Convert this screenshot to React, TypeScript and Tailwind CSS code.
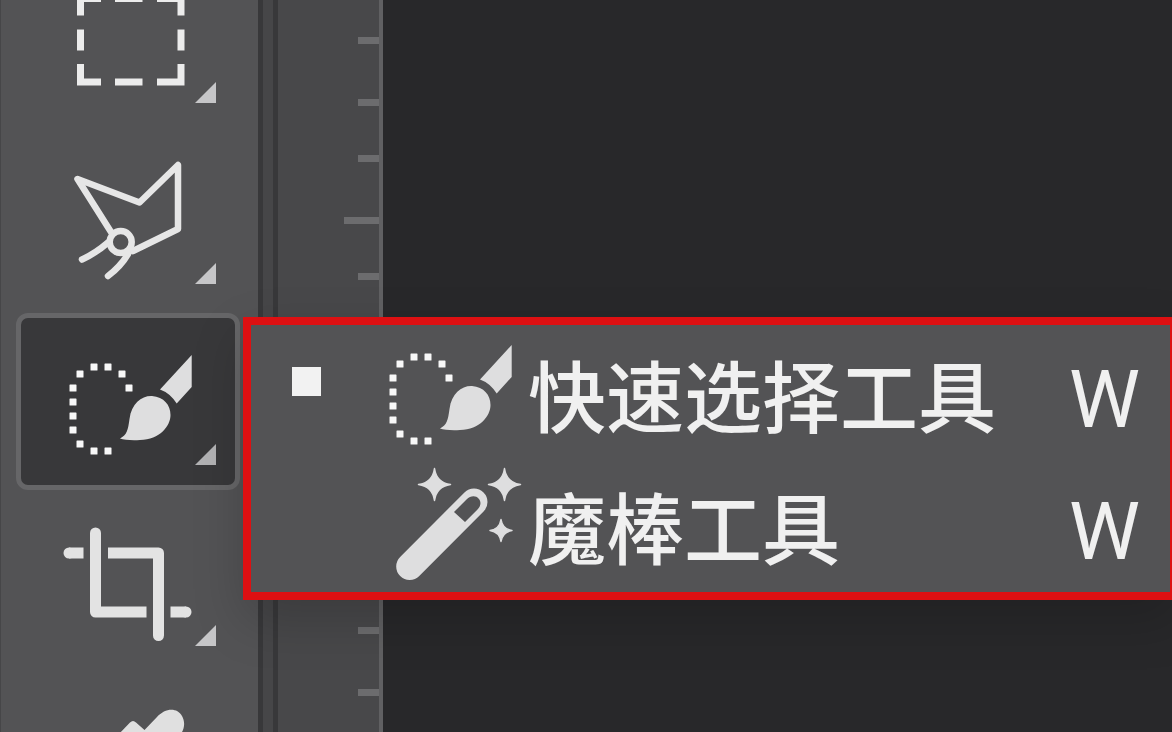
import type { ReactNode } from "react";

const selectionDots = [
  [81, 57], [74, 43], [60, 36], [46, 36], [32, 43], [25, 57],
  [25, 71], [25, 85], [25, 99], [32, 113], [46, 120], [60, 120],
];

function MarqueeIcon() {
  return (
    <svg viewBox="0 0 160 141" className="h-[141px] w-40" fill="none" stroke="#ececec" strokeWidth="7" aria-hidden="true">
      <path d="M32.5 46.5V29.5H53M67 29.5H94.5M109 29.5H133V46.5M32.5 60.5V81.5M133 60.5V81.5M32.5 95V113H53M67 113H94.5M109 113H133V95" />
    </svg>
  );
}

function LassoIcon() {
  return (
    <svg viewBox="0 0 160 141" className="h-[141px] w-40" fill="none" stroke="#e6e6e6" strokeWidth="6.5" strokeLinecap="round" strokeLinejoin="round" aria-hidden="true">
      <path d="M63 82L29.5 29L91.5 52.5L130 15V79L85 101" />
      <circle cx="72.7" cy="92" r="11" strokeWidth="6.5" />
      <path d="M34 109.5Q48 103 60 92.500M60 126Q73 116 80 104" />
    </svg>
  );
}

function QuickSelectionIcon({ viewBox, className }: { viewBox: string; className: string }) {
  return (
    <svg viewBox={viewBox} className={className} aria-hidden="true">
      {selectionDots.map(([x, y]) => (
        <rect key={`${x}-${y}`} x={x - 3.5} y={y - 3.5} width="7" height="7" rx="0.6" fill="#f8f8f8" />
      ))}
      <g fill="#dededf">
        <path d="M143.700 24V56L128.700 72.500Q122 62 112 58.500Z" />
        <path d="M72 107.500C79 104 80 99 81.500 88C83.500 72 94 64.500 104 65C116 66 122.500 74 122.500 84C122.500 95 112 108.500 92 109C84 109.500 76 109 72 107.500Z" />
      </g>
    </svg>
  );
}

function CropIcon() {
  return (
    <svg viewBox="0 0 160 141" className="h-[141px] w-40" aria-hidden="true">
      <path d="M47.500 21V100H98.500M122.500 100H138M21 41H35.500M60 41H110.500V123.500" fill="none" stroke="#e3e3e3" strokeWidth="11" strokeLinejoin="round" />
      <g fill="#e3e3e3">
        <circle cx="47.5" cy="21" r="5.5" />
        <circle cx="138" cy="100" r="5.5" />
        <circle cx="21" cy="41" r="5.5" />
        <circle cx="110.5" cy="123.500" r="5.5" />
      </g>
    </svg>
  );
}

function EyedropperIcon() {
  return (
    <svg viewBox="0 0 160 141" className="h-[141px] w-40" fill="#e0e0e0" aria-hidden="true">
      <path d="M70 42L82 29.500Q85 26.500 88 29.500L96.500 37L109 24C117 15 129 14 134 23C138 30 136 38 131 43L118 56L124 62L116 72Z" />
      <path d="M88 60L36 110L30 124L44 118L98 68" fill="none" stroke="#e0e0e0" strokeWidth="7" />
    </svg>
  );
}

function WandIcon() {
  return (
    <svg viewBox="0 0 141 132" className="h-[132px] w-[141px]" aria-hidden="true">
      <g fill="#dededf" stroke="#dededf" strokeWidth="1.5" strokeLinejoin="round">
        <path d="M48.500 8.500Q50.500 22.500 64.500 24.500Q50.500 26.500 48.500 40.500Q46.500 26.500 32.500 24.500Q46.500 22.500 48.500 8.500Z" />
        <path d="M118.500 8.500Q120.500 22.500 134.500 24.500Q120.500 26.500 118.500 40.500Q116.500 26.500 102.500 24.500Q116.500 22.500 118.500 8.500Z" />
        <path d="M115 59.500Q116.500 69 126 70.500Q116.500 72 115 81.500Q113.500 72 104 70.500Q113.500 69 115 59.500Z" />
      </g>
      <path d="M23.700 106.500L88 42" stroke="#dededf" strokeWidth="27" strokeLinecap="round" />
      <path d="M68 52L80.500 39.500C84.500 35.500 90 35.500 92.500 38.500C95.500 41.500 95 46 91.500 49.500L79 62Z" fill="#535355" />
    </svg>
  );
}

function ToolButton({ label, selected = false, children }: { label: string; selected?: boolean; children: ReactNode }) {
  return (
    <button
      type="button"
      aria-label={label}
      aria-pressed={selected}
      className={`relative flex h-[177px] shrink-0 items-center justify-center rounded-xl border-[5px] ${
        selected ? "border-[#666668] bg-[#38383a]" : "border-transparent"
      }`}
    >
      {children}
      <svg viewBox="0 0 21 21" className="absolute right-[19px] bottom-5 size-[21px]" aria-hidden="true">
        <path d="M21 0V21H0Z" fill={selected ? "#b2b2b4" : "#c6c6c8"} />
      </svg>
    </button>
  );
}

function MenuItem({ label, shortcut, checked = false, children }: { label: string; shortcut: string; checked?: boolean; children: ReactNode }) {
  return (
    <button
      type="button"
      role="menuitemradio"
      aria-checked={checked}
      className="flex h-[132px] w-full items-center pr-[30px] pl-[41px] text-[78px] leading-none whitespace-nowrap text-[#f0f0f0]"
    >
      <span className={`mb-[26px] size-[29px] shrink-0 ${checked ? "bg-[#f2f2f2]" : ""}`} />
      <span className="ml-[65px] shrink-0">{children}</span>
      <span className="mb-0.5 ml-px flex grow items-baseline justify-between">
        <span>{label}</span>
        <span className="font-['Roboto',sans-serif] text-[80px] leading-[64px] font-normal">{shortcut}</span>
      </span>
    </button>
  );
}

const rulerTicks = [
  "h-11 w-[21px]", "h-[62px] w-[21px]", "h-14 w-[21px]", "h-[62px] w-[35px]", "h-14 w-[21px]", "h-[62px] w-[21px]",
  "h-14 w-[21px]", "h-[62px] w-[35px]", "h-14 w-[21px]", "h-[62px] w-[21px]", "h-14 w-[21px]", "h-[62px] w-[21px]",
];

export default function App() {
  return (
    <div className="relative flex h-screen overflow-hidden bg-[#28282a] font-['Noto_Sans_CJK_SC',sans-serif] font-medium">
      <nav aria-label="工具" className="flex w-[258px] shrink-0 flex-col overflow-hidden border-l border-[#464648] bg-[#535355] pr-[18px] pl-[15px]">
        <div className="-mt-[49px] flex flex-col gap-1">
          <ToolButton label="矩形选框工具"><MarqueeIcon /></ToolButton>
          <ToolButton label="多边形套索工具"><LassoIcon /></ToolButton>
          <ToolButton label="快速选择工具" selected>
            <QuickSelectionIcon viewBox="0 0 160 141" className="h-[141px] w-40" />
          </ToolButton>
          <ToolButton label="裁剪工具"><CropIcon /></ToolButton>
          <ToolButton label="吸管工具"><EyedropperIcon /></ToolButton>
        </div>
      </nav>
      <div className="w-5 shrink-0 border-x-[5px] border-[#38383a] bg-[#464648]" />
      <div className="flex w-[105px] shrink-0 flex-col items-end overflow-hidden border-r-4 border-[#606062] bg-[#48484a]">
        {rulerTicks.map((size, index) => (
          <div key={index} className={`shrink-0 border-b-[7px] border-[#6c6c6e] ${size}`} />
        ))}
      </div>
      <main className="grow" />
      <div
        role="menu"
        className="absolute top-[317px] -right-1.5 left-[243px] border-8 border-[#dd1012] bg-[#535355] pt-[3px] shadow-[0_20px_48px_rgba(0,0,0,0.18)]"
      >
        <MenuItem label="快速选择工具" shortcut="W" checked>
          <QuickSelectionIcon viewBox="18 7 141 132" className="h-[132px] w-[141px]" />
        </MenuItem>
        <MenuItem label="魔棒工具" shortcut="W"><WandIcon /></MenuItem>
      </div>
    </div>
  );
}
